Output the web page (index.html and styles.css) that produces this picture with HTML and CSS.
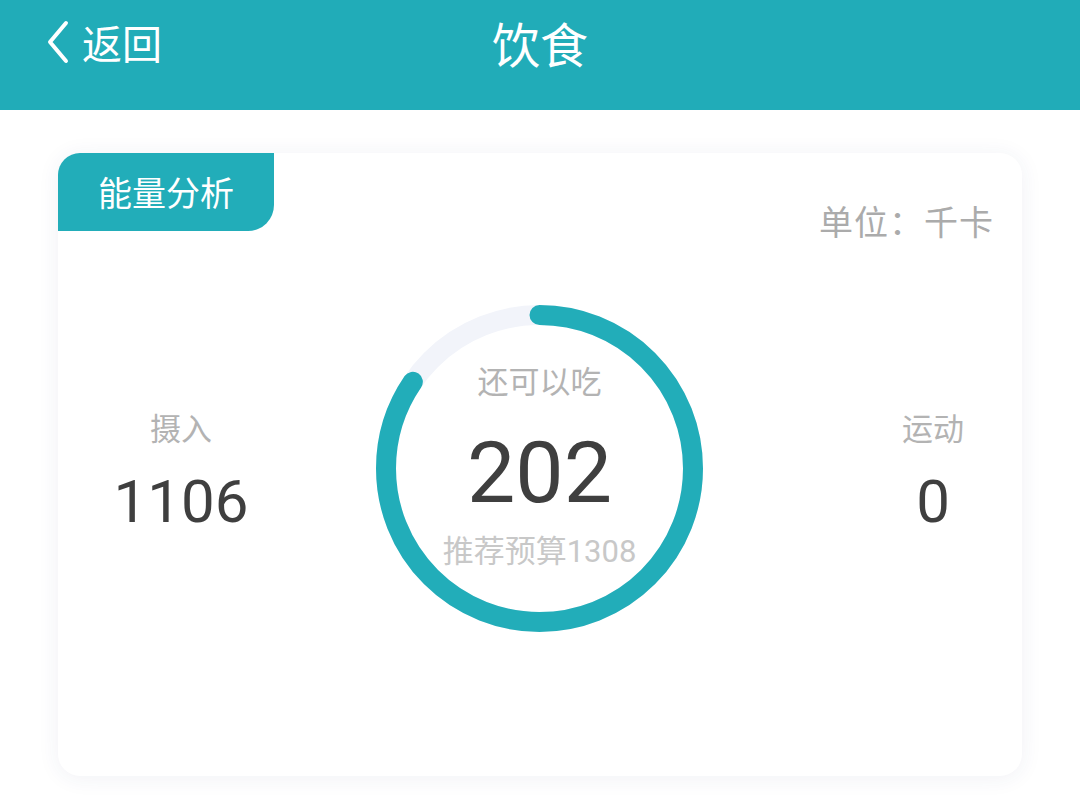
FILE: index.html
```html
<!DOCTYPE html>
<html lang="zh-CN">
<head>
<meta charset="utf-8">
<title>饮食</title>
<link rel="stylesheet" href="styles.css">
</head>
<body>
<header class="topbar">
  <div class="back">
    <svg class="chevron" viewBox="0 0 24 44" width="24" height="44"><path d="M20 3 L4 22 L20 41" fill="none" stroke="#fff" stroke-width="4" stroke-linecap="round" stroke-linejoin="round"/></svg>
    <span class="back-text">返回</span>
  </div>
  <h1 class="title">饮食</h1>
  <div class="spacer"></div>
</header>
<main class="page">
  <section class="card">
    <div class="card-head">
      <div class="tag">能量分析</div>
      <div class="unit">单位：千卡</div>
    </div>
    <div class="energy-row">
      <div class="stat stat-left">
        <div class="stat-label">摄入</div>
        <div class="stat-num">1106</div>
      </div>
      <div class="ring">
        <svg class="ring-svg" viewBox="0 0 327 327" width="327" height="327">
          <circle cx="163.5" cy="163.5" r="153.5" fill="none" stroke="#F2F4FA" stroke-width="20"/>
          <circle cx="163.5" cy="163.5" r="153.5" fill="none" stroke="#22ADB9" stroke-width="20" stroke-linecap="round" pathLength="100" stroke-dasharray="84.56 100" transform="rotate(-90 163.5 163.5)"/>
        </svg>
        <div class="ring-text">
          <div class="remain-label">还可以吃</div>
          <div class="remain-num">202</div>
          <div class="budget">推荐预算1308</div>
        </div>
      </div>
      <div class="stat stat-right">
        <div class="stat-label">运动</div>
        <div class="stat-num">0</div>
      </div>
    </div>
  </section>
</main>
</body>
</html>
```
FILE: styles.css
```css
* { box-sizing: border-box; }
html, body { margin: 0; padding: 0; }
body {
  width: 1080px;
  height: 797px;
  overflow: hidden;
  background: #ffffff;
  font-family: Roboto, "Noto Sans CJK SC", sans-serif;
}
.topbar {
  height: 110px;
  background: #21ACB8;
  display: grid;
  grid-template-columns: 1fr auto 1fr;
  align-items: start;
  padding: 0 46px;
  color: #ffffff;
}
.back {
  display: flex;
  align-items: center;
  height: 84px;
  gap: 12px;
}
.chevron { display: block; }
.back-text {
  font-size: 40px;
  line-height: 84px;
  font-family: "Noto Sans CJK SC", sans-serif;
}
.title {
  margin: 0;
  font-weight: 400;
  font-size: 48px;
  line-height: 84px;
  font-family: "Noto Sans CJK SC", sans-serif;
}
.page {
  padding: 43px 58px 0 58px;
}
.card {
  height: 623px;
  background: #ffffff;
  border-radius: 22px;
  box-shadow: 0 2px 22px rgba(40, 60, 120, 0.07);
  overflow: hidden;
}
.card-head {
  display: flex;
  justify-content: space-between;
  align-items: flex-start;
  height: 78px;
}
.tag {
  width: 216px;
  height: 78px;
  background: #22ADB9;
  color: #ffffff;
  border-bottom-right-radius: 26px;
  font-family: "Noto Sans CJK SC", sans-serif;
  font-size: 34px;
  line-height: 78px;
  text-align: center;
}
.unit {
  margin-top: 48px;
  margin-right: 28px;
  font-family: "Noto Sans CJK SC", sans-serif;
  font-size: 34px;
  line-height: 40px;
  letter-spacing: 1px;
  color: #ABABAB;
}
.energy-row {
  display: flex;
  align-items: center;
  margin-top: 74px;
}
.stat {
  display: flex;
  flex-direction: column;
  align-items: center;
  margin-top: 6px;
}
.stat-left { width: 246px; }
.stat-right { width: 120px; margin-left: 170px; }
.stat-label {
  font-family: "Noto Sans CJK SC", sans-serif;
  font-size: 31px;
  line-height: 40px;
  color: #B3B3B3;
}
.stat-num {
  margin-top: 20px;
  font-size: 60px;
  line-height: 70px;
  color: #3F3F3F;
}
.ring {
  margin-left: 72px;
  width: 327px;
  height: 327px;
  display: grid;
}
.ring-svg, .ring-text { grid-area: 1 / 1; }
.ring-svg { display: block; }
.ring-text {
  display: flex;
  flex-direction: column;
  align-items: center;
  padding-top: 55px;
}
.remain-label {
  font-family: "Noto Sans CJK SC", sans-serif;
  font-size: 31px;
  line-height: 40px;
  color: #B3B3B3;
}
.remain-num {
  margin-top: 25px;
  font-size: 86px;
  line-height: 96px;
  color: #3F3F3F;
}
.budget {
  margin-top: 11px;
  font-size: 31px;
  line-height: 40px;
  color: #C8C8C8;
}
```
